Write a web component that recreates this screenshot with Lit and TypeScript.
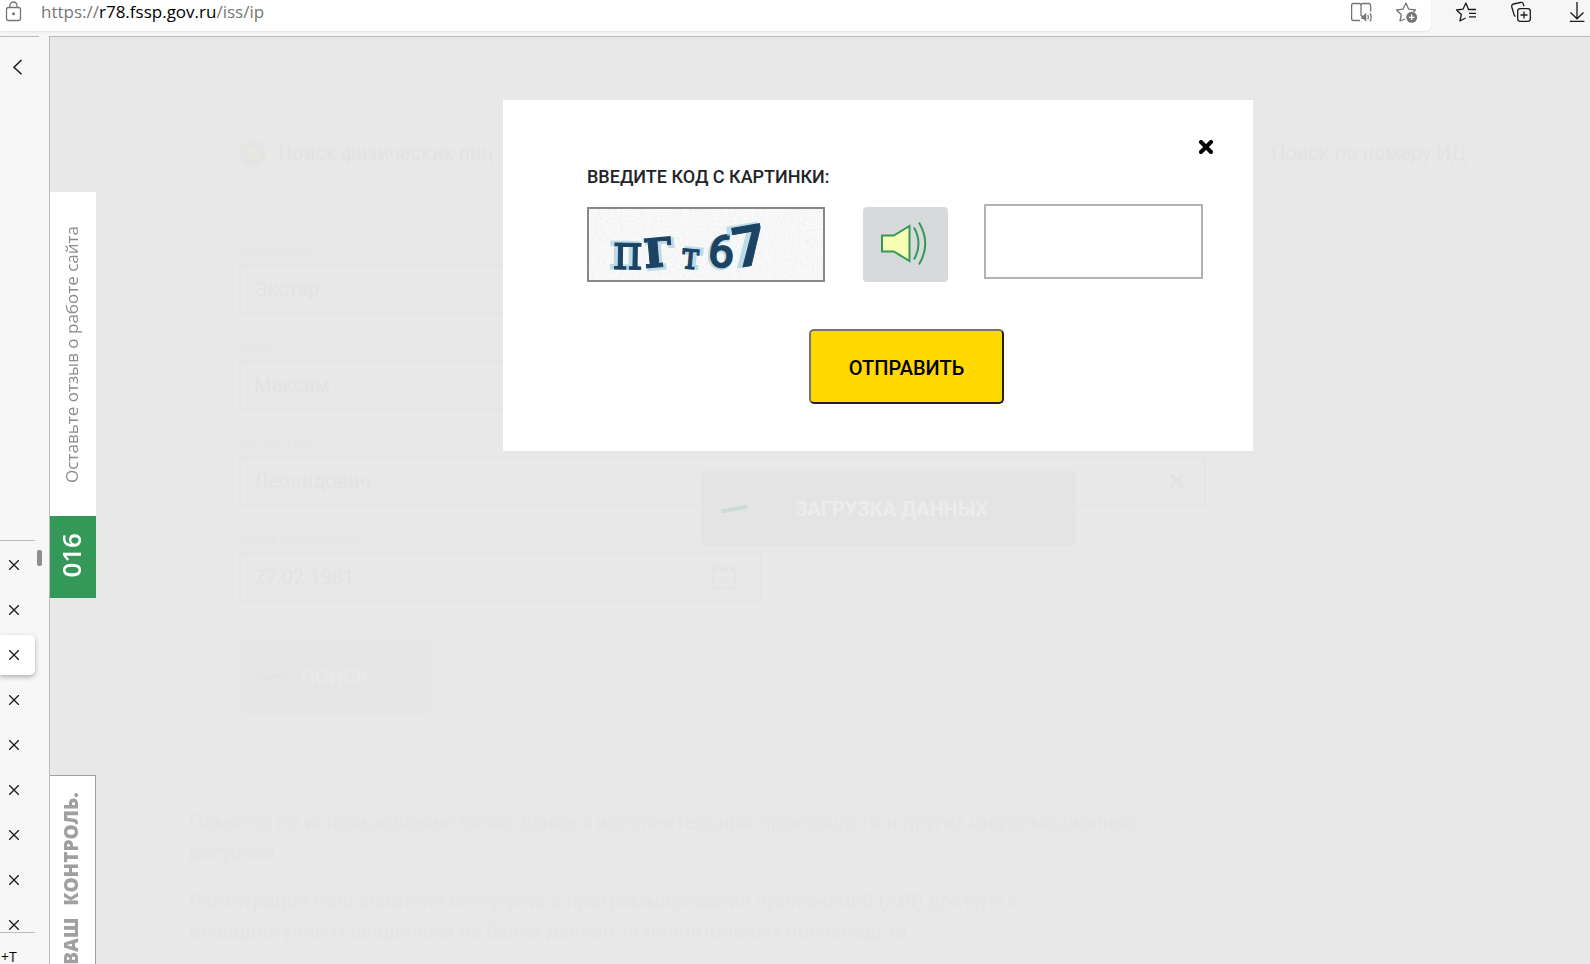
import { LitElement, html, css, svg } from "lit";
import { customElement } from "lit/decorators.js";

const cross = svg`<path d="M2 2 12 12M12 2 2 12" stroke="currentColor" stroke-width="4" stroke-linecap="round"/>`;

@customElement("browser-toolbar")
class BrowserToolbar extends LitElement {
  static styles = css`
    :host { display: flex; height: 36px; background: #f6f6f6; color: #1b1b1b; padding-right: 1px; box-sizing: border-box; }
    .address {
      flex: 1; display: flex; align-items: center; height: 31px; box-sizing: border-box; padding: 0 12px 7px 2px;
      background: #fff; border-bottom-right-radius: 6px; box-shadow: 0 1px 2px rgba(0, 0, 0, 0.08); color: #767676;
    }
    .url {
      flex: 1; min-width: 0; margin-left: 15px; display: flex; font: 17px/24px "Open Sans", "Noto Sans", sans-serif;
      color: #767676; text-decoration: none;
    }
    .host { color: #000; }
    .actions { display: flex; gap: 21px; }
    .tools { display: flex; gap: 31px; margin-left: 24px; }
    button { display: block; padding: 0; border: 0; background: none; color: inherit; width: 24px; height: 24px; }
    svg { display: block; flex: none; fill: none; stroke: currentColor; stroke-width: 1.3; }
    .solid { fill: currentColor; stroke: none; }
    .plus { stroke: #fff; }
  `;

  render() {
    return html`
      <div class="address">
        <svg width="24" height="24" viewBox="0 0 24 24">
          <rect x="4.5" y="7.5" width="14" height="13" rx="2" />
          <path d="M8 7.500V5.500a3.500 3.500 0 0 1 7 0v2" />
          <circle class="solid" cx="11.500" cy="13.700" r="1.500" />
        </svg>
        <a class="url" href="#">https://<span class="host">r78.fssp.gov.ru</span>/iss/ip</a>
        <div class="actions">
          <button aria-label="Иммерсивное чтение">
            <svg width="24" height="24" viewBox="0 0 24 24">
              <path d="M10 20.500H3.500Q1.600 20.500 1.600 18.500V5.500Q1.600 3.500 3.500 3.500H9Q11 3.500 11 5.500Q11 3.500 13 3.500H18.600Q20.600 3.500 20.600 5.500V11.500M11 5V16" />
              <path class="solid" d="M11.300 15.500h2l3-2.700v9l-3-2.700h-2z" />
              <path d="M17.800 15q1.300 2.200 0 4.400M19.900 13.300q2.700 4 0 8" />
            </svg>
          </button>
          <button aria-label="Добавить в избранное">
            <svg width="24" height="24" viewBox="0 0 24 24">
              <path d="M10 19 5 21 6.300 14.500 1.500 10 8 9.200 10.900 3 13.700 9.200 20.500 10 18.500 12" stroke-linejoin="round" />
              <circle class="solid" cx="16.700" cy="17.300" r="5.500" />
              <path class="plus" d="M16.700 14.500v5.600M13.900 17.300h5.600" />
            </svg>
          </button>
        </div>
      </div>
      <div class="tools">
        <button aria-label="Избранное">
          <svg width="24" height="24" viewBox="0 0 24 24">
            <path d="M10.500 18 5 21 6.300 14.500 1.500 10 8 9.200 10.900 3 13.500 9.500 H21M14 13.300h7M14 16.900h7" stroke-linejoin="round" />
          </svg>
        </button>
        <button aria-label="Коллекции">
          <svg width="24" height="24" viewBox="0 0 24 24">
            <rect x="7.700" y="8.700" width="12.600" height="12.600" rx="2.500" />
            <path d="M14 11.500v7M10.500 15h7M5.500 16.500Q4.500 16 4 14.500L1.800 7Q1.200 4.600 3.500 4L10.500 2.500Q12.700 2 13.400 4.200L14 6.300" />
          </svg>
        </button>
        <button aria-label="Загрузки">
          <svg width="24" height="24" viewBox="0 0 24 24">
            <path d="M12 2v16.500M5.500 12.500l6.500 6.300 6.500-6.300M4.800 21.400h14.600" />
          </svg>
        </button>
      </div>
    `;
  }
}

@customElement("tab-rail")
class TabRail extends LitElement {
  static styles = css`
    :host { display: flex; flex-direction: column; width: 49px; flex: none; background: #f7f7f7; color: #1b1b1b; box-sizing: border-box; }
    button { display: block; padding: 0; border: 0; background: none; color: inherit; }
    svg { display: block; fill: none; stroke: currentColor; }
    .head { box-sizing: border-box; height: 504px; width: 39px; border-top: 1px solid #bbb; padding: 22px 0 0 11px; }
    .middle { display: flex; align-items: flex-start; }
    .list { width: 35px; height: 393px; box-sizing: border-box; border-top: 1px solid #bbb; border-bottom: 1px solid #bbb; padding-top: 4px; }
    .tab { height: 40px; margin-bottom: 5px; display: flex; align-items: center; padding-left: 9px; border-radius: 0 5px 5px 0; }
    .tab:last-child { margin-bottom: 0; }
    .active { background: #fff; box-shadow: 0 2px 5px rgba(0, 0, 0, 0.3); }
    .thumb { width: 5px; height: 16px; margin: 10px 0 0 2px; border-radius: 2px; background: #8e8e8e; }
    .hint { padding: 17px 0 0 1px; font: 14px/14px "Open Sans", sans-serif; white-space: nowrap; color: #000; }
  `;

  render() {
    return html`
      <div class="head">
        <button aria-label="Свернуть">
          <svg width="14" height="16" viewBox="0 0 14 16"><path d="M10.500 1 3 8.300l7.500 7" stroke-width="1.500" /></svg>
        </button>
      </div>
      <div class="middle">
        <div class="list">
          ${Array.from({ length: 9 }, (_, i) => html`
            <div class="tab ${i === 2 ? "active" : ""}">
              <button aria-label="Закрыть вкладку">
                <svg width="10" height="10" viewBox="0 0 10 10"><path d="M0 0 10 10M10 0 0 10" stroke-width="1.300" /></svg>
              </button>
            </div>`)}
        </div>
        <div class="thumb"></div>
      </div>
      <div class="hint">+T</div>
    `;
  }
}

@customElement("captcha-dialog")
class CaptchaDialog extends LitElement {
  static styles = css`
    :host { display: block; width: 750px; box-sizing: border-box; background: #fff; padding: 40px 40px 47px 84px; font-family: Roboto, sans-serif; }
    svg { display: block; fill: none; }
    .close { display: block; margin: 0 0 0 auto; padding: 0; border: 0; background: none; color: #000; }
    .title { display: block; margin-top: 13px; font-size: 18px; line-height: 20px; font-weight: 500; color: #212529; text-transform: uppercase; }
    .row { display: flex; align-items: flex-start; margin-top: 17px; }
    .picture { width: 234px; height: 71px; border: 2px solid #888; margin-top: 3px; }
    .sound { width: 85px; height: 75px; margin: 3px 36px 0 38px; padding: 0 2px 0 0; border: 0; border-radius: 4px; background: #d6dadb; display: grid; place-items: center; }
    .code { width: 219px; height: 75px; box-sizing: border-box; border: 2px solid #b3b3b3; border-radius: 0; background: #fff; padding: 0 16px; font: 20px Roboto, sans-serif; outline: none; }
    .send {
      display: block; width: 195px; height: 75px; margin: 47px 0 0 222px; padding: 2px 0 0; border: 2px solid; border-color: #767676 #212121 #212121 #767676;
      border-radius: 5px; background: #ffd800; color: #000; font: 500 20px/24px Roboto, sans-serif; text-transform: uppercase;
    }
    .ghost { fill: #a9d3e2; stroke: #a9d3e2; stroke-width: 3; opacity: 0.75; }
    .ink { fill: #1c4363; stroke: #1c4363; stroke-width: 1; }
    .serif { font-family: "DejaVu Serif Condensed", "DejaVu Serif", serif; }
    .sans { font-family: Roboto, sans-serif; }
  `;

  private glyph(ch: string, x: number, y: number, size: number, turn: number, cls: string, weight: number, gx = -3, gy = -1) {
    const place = (dx: number, dy: number, kind: string) => svg`
      <text class="${kind} ${cls}" x=${x + dx} y=${y + dy} font-size=${size} font-weight=${weight}
        transform="rotate(${turn} ${x} ${y})">${ch}</text>`;
    return svg`<g aria-hidden="true">${place(gx, gy, "ghost")}</g>${place(0, 0, "ink")}`;
  }

  render() {
    return html`
      <button class="close" aria-label="Закрыть"><svg width="14" height="14" viewBox="0 0 14 14">${cross}</svg></button>
      <label class="title" for="code">Введите код с картинки:</label>
      <div class="row">
        <svg class="picture" viewBox="0 0 234 71">
          <filter id="grain" x="0" y="0" width="100%" height="100%">
            <feTurbulence type="fractalNoise" baseFrequency="0.35" numOctaves="2" seed="4" />
            <feColorMatrix values="0 0 0 0 0.7  0 0 0 0 0.72  0 0 0 0 0.75  0.5 0 0 0 -0.14" />
          </filter>
          <rect width="234" height="71" fill="#fafafa" />
          <rect width="234" height="71" filter="url(#grain)" />
          ${this.glyph("п", 24, 60, 50, 1, "serif", 400)}
          ${this.glyph("г", 56, 59, 56, -5, "serif", 700, 2, 2)}
          ${this.glyph("т", 91, 59, 38, 5, "serif", 400, 3, -1)}
          ${this.glyph("6", 118, 57, 46, 5, "sans", 500, -1, 1)}
          ${this.glyph("7", 148, 59, 56, -10, "sans", 700, -4, -1)}
        </svg>
        <button class="sound" aria-label="Прослушать код">
          <svg width="48" height="48" viewBox="0 0 48 48" stroke="#349858" stroke-width="2">
            <path d="M1 14.500H12.800L28.500 5V40L12.800 30.500H1Z" fill="#f6ffb4" />
            <path d="M33 6.500Q42 22.500 33 38.500M38 1.500Q50.500 22.500 38 43.500" />
          </svg>
        </button>
        <input class="code" id="code" type="text" autocomplete="off" />
      </div>
      <button class="send">Отправить</button>
    `;
  }
}

@customElement("search-page")
class SearchPage extends LitElement {
  static styles = css`
    :host { display: block; padding: 101px 124px 0 139px; box-sizing: border-box; font: 20px/30px Roboto, sans-serif; color: #e3e3e3; overflow: hidden; }
    .kinds { display: flex; justify-content: space-between; margin: 0 0 0 50px; padding: 0; border: 0; }
    .kind { display: flex; align-items: center; gap: 12px; }
    .radio { appearance: none; width: 27px; height: 27px; margin: 0; border: 1px solid #e3e5e5; border-radius: 50%; }
    .radio:checked { border: 7px solid #e4e6e4; background: #e8e8e0; }
    .fields { width: 967px; max-width: 100%; margin: 70px 0 0 50px; }
    .label { display: block; height: 24px; margin-bottom: 2px; font: italic 17px/24px Roboto, sans-serif; color: #e6e6e6; }
    .box { display: flex; align-items: center; height: 50px; margin-bottom: 20px; border: 2px solid #e5e5e5; box-sizing: border-box; padding-right: 20px; }
    .date { width: 523px; max-width: 100%; }
    .input { flex: 1; min-width: 0; padding: 0 0 0 13px; border: 0; background: none; font: inherit; color: inherit; outline: none; }
    svg { display: block; fill: none; }
    .search { display: flex; align-items: center; width: 192px; height: 75px; margin: 37px 0 0 50px; padding: 0 0 0 20px; gap: 16px; border: 0; border-radius: 4px; background: #e6e6e6; color: #e9e9e9; font: 700 20px/24px Roboto, sans-serif; }
    .links { width: 964px; max-width: 100%; margin-top: 93px; }
    .link { display: block; margin-bottom: 19px; color: #e4e6e5; text-decoration: none; }
  `;

  private field(id: string, label: string, value: string, icon: unknown = null, cls = "") {
    return html`
      <label class="label" for=${id}>${label}</label>
      <div class="box ${cls}"><input class="input" id=${id} type="text" .value=${value} />${icon}</div>`;
  }

  render() {
    return html`
      <div class="kinds">
        <label class="kind"><input class="radio" type="radio" name="kind" checked />Поиск физических лиц</label>
        <label class="kind"><input class="radio" type="radio" name="kind" />Поиск по номеру ИД</label>
      </div>
      <div class="fields">
        ${this.field("last", "Фамилия:*", "Экстер")}
        ${this.field("first", "Имя:*", "Максим")}
        ${this.field("middle", "Отчество:", "Леонидович", html`<svg width="14" height="14" viewBox="0 0 14 14">${cross}</svg>`)}
        ${this.field("born", "Дата рождения:*", "27.02.1981", html`
          <svg width="28" height="26" viewBox="0 0 28 26" stroke="currentColor" stroke-width="1.500">
            <path d="M1 4.500H23V24H1Z" /><path d="M1 5.500H23" stroke-width="4" />
            <rect x="4" y="1" width="4" height="6" rx="2" fill="#e8e8e8" /><rect x="15" y="1" width="4" height="6" rx="2" fill="#e8e8e8" />
            <path d="M7 15l4 4 7-7" />
          </svg>`, "date")}
      </div>
      <button class="search">
        <svg width="26" height="10" viewBox="0 0 26 10"><path d="M0 7 26 3" stroke="#e1e5e3" stroke-width="3" /></svg>ПОИСК
      </button>
      <div class="links">
        <a class="link" href="#">Памятка по использованию банка данных исполнительных производств и других информационных ресурсов</a>
        <a class="link" href="#">Регистрация пользователя интерфейса программирования приложений (API) доступа к общедоступным сведениям из банка данных исполнительных производств</a>
      </div>
    `;
  }
}

@customElement("app-root")
class AppRoot extends LitElement {
  static styles = css`
    :host { display: flex; flex-direction: column; height: 100vh; overflow: hidden; background: #f7f7f7; }
    .body { flex: 1; min-height: 0; display: flex; }
    .stage { flex: 1; min-width: 0; position: relative; display: flex; background: #e8e8e8; border: solid #bbb; border-width: 1px 0 0 1px; overflow: hidden; }
    search-page { flex: 1; min-width: 0; }
    .flags { position: absolute; inset: 155px auto 0 0; width: 46px; display: flex; flex-direction: column; font-family: "Open Sans", sans-serif; }
    .flag { flex: none; display: flex; align-items: center; justify-content: center; box-sizing: border-box; text-decoration: none; }
    .turned { writing-mode: vertical-rl; transform: rotate(180deg); white-space: nowrap; }
    .review { height: 324px; background: #fff; color: #8c8c8c; font-size: 17px; line-height: 24px; padding-right: 2px; }
    .count { height: 82px; background: #349858; color: #fff; font-size: 26px; line-height: 32px; font-weight: 600; padding: 0 4px 4px 0; }
    .control { flex: 1; min-height: 0; margin-top: 177px; background: #fff; border: solid #a0a0a0; border-width: 1px 1px 0 0; color: #a0a0a0; font-weight: 800; font-size: 19px; line-height: 24px; align-items: flex-start; padding: 16px 4px 0 0; }
    .words { display: flex; gap: 12px; }
    .overlay { position: absolute; inset: 63px 0 auto 116px; display: flex; justify-content: center; }
    .loader { position: absolute; inset: 434px 0 auto 137px; display: flex; justify-content: center; }
    .loading { display: flex; align-items: center; width: 375px; height: 75px; box-sizing: border-box; padding-left: 20px; gap: 48px; border-radius: 5px; background: #e4e4e4; color: #ececec; font: 700 20px/24px Roboto, sans-serif; }
    svg { display: block; fill: none; }
  `;

  render() {
    return html`
      <browser-toolbar></browser-toolbar>
      <div class="body">
        <tab-rail></tab-rail>
        <main class="stage">
          <search-page></search-page>
          <div class="loader">
            <div class="loading" role="status">
              <svg width="26" height="10" viewBox="0 0 26 10"><path d="M0 7.500 26 2.500" stroke="#c8ddd5" stroke-width="4" /></svg>
              ЗАГРУЗКА ДАННЫХ
            </div>
          </div>
          <nav class="flags">
            <a class="flag review" href="#"><span class="turned">Оставьте отзыв о работе сайта</span></a>
            <a class="flag count" href="#"><span class="turned">016</span></a>
            <a class="flag control" href="#"><span class="turned words"><span>ВАШ</span><span>КОНТРОЛЬ.</span></span></a>
          </nav>
          <div class="overlay"><captcha-dialog role="dialog"></captcha-dialog></div>
        </main>
      </div>
    `;
  }
}
